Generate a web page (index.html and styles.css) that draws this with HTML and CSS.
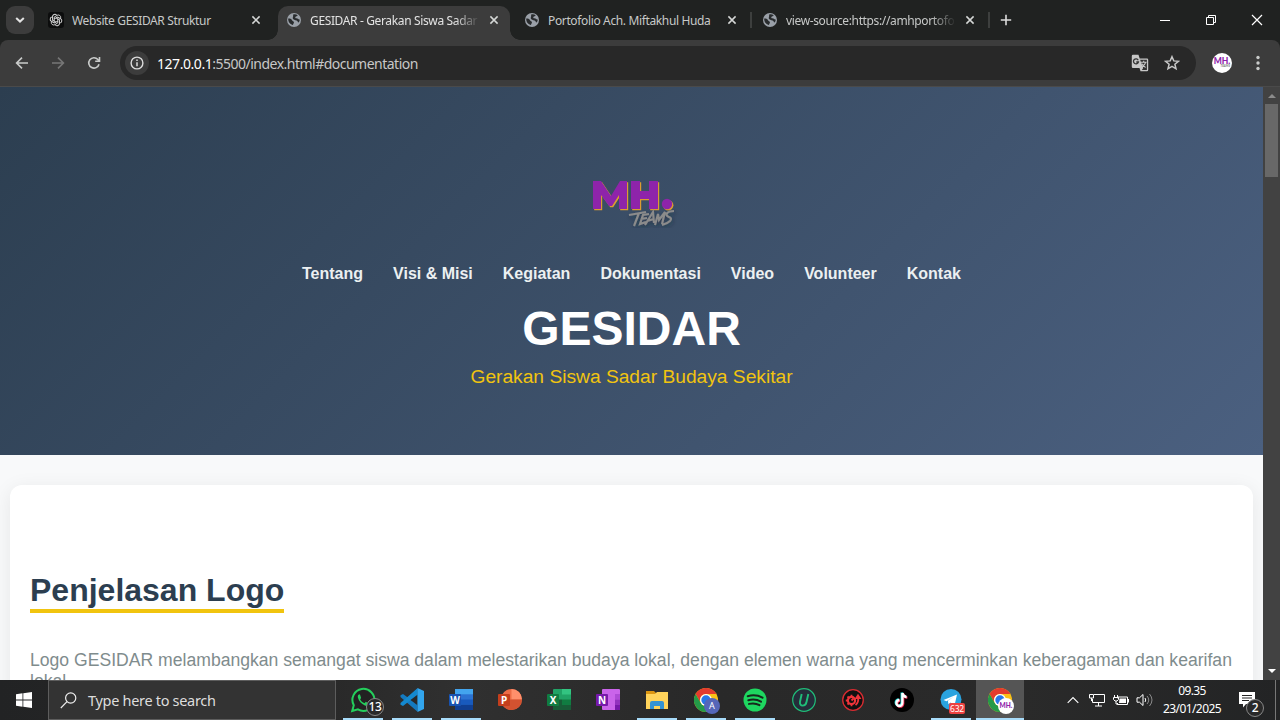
FILE: index.html
```html
<!DOCTYPE html>
<html lang="id">
<head>
<meta charset="utf-8">
<title>GESIDAR - Gerakan Siswa Sadar Budaya Sekitar</title>
<link rel="stylesheet" href="styles.css">
</head>
<body>
<svg class="defs" width="0" height="0">
  <symbol id="globe" viewBox="0 0 16 16"><circle cx="8" cy="8" r="7" fill="#9aa0a8"/><path d="M2.200 6.600C4 6.400 5.600 7 6 8.200c.4 1.100 1.600.7 1.900 1.700.3 1.200-.8 1.500-.9 3.100C4.600 12.600 2 10.500 2.200 6.600zM7 2.700c1.500-.7 3.500-.4 4.600.6-.2 1.200-1.800.9-2.300 1.900-.4 1 .8 1 2 1.200 1.100.2 1.400 1.100 2.500 1.200-.1 1.200-.5 2.200-1.200 3-1-.4-.8-1.900-2-2.200C9 8.100 7.200 7.800 6.800 6.500 6.500 5.300 7.600 4.300 7 2.700z" fill="#292c2e"/></symbol>
  <symbol id="x" viewBox="0 0 10 10"><path d="M1.400 1.400l7.200 7.200M8.600 1.400L1.400 8.600" stroke="#d5d7d6" stroke-width="1.500" fill="none"/></symbol>
  <symbol id="chrome" viewBox="0 0 24 24"><circle cx="12" cy="12" r="12" fill="#fbc116"/><path d="M1.600 6A12 12 0 0 1 22.400 6H12a6 6 0 0 0-5.200 9z" fill="#e33b2e"/><path d="M1.600 6A12 12 0 0 0 12 24l5.200-9A6 6 0 0 1 6.800 15z" fill="#249a48"/><circle cx="12" cy="12" r="6" fill="#fff"/><circle cx="12" cy="12" r="4.700" fill="#2877e8"/></symbol>
</svg>
<div class="screen">
  <div class="tabs">
    <div class="search-tabs"><svg width="10" height="6" viewBox="0 0 10 6"><path d="M1.200 1L5 4.600 8.800 1" fill="none" stroke="#e3e3e3" stroke-width="2"/></svg></div>
    <div class="tab">
      <svg class="fav" viewBox="0 0 16 16"><rect width="16" height="16" rx="3" fill="#0c0d0d"/><g fill="none" stroke="#d5d5d5" stroke-width="1"><path id="p" d="M6.200 9V5.100l3-1.800c1.800-1 4 .7 3.500 2.600"/><use href="#p" transform="rotate(60 8 8)"/><use href="#p" transform="rotate(120 8 8)"/><use href="#p" transform="rotate(180 8 8)"/><use href="#p" transform="rotate(240 8 8)"/><use href="#p" transform="rotate(300 8 8)"/></g></svg>
      <span class="title">Website GESIDAR Struktur</span><svg class="close"><use href="#x"/></svg>
    </div>
    <div class="tab active">
      <svg class="fav"><use href="#globe"/></svg><span class="title fade">GESIDAR - Gerakan Siswa Sadar</span><svg class="close"><use href="#x"/></svg>
    </div>
    <div class="tab sep">
      <svg class="fav"><use href="#globe"/></svg><span class="title">Portofolio Ach. Miftakhul Huda</span><svg class="close"><use href="#x"/></svg>
    </div>
    <div class="tab sep">
      <svg class="fav"><use href="#globe"/></svg><span class="title fade">view-source:https://amhportofo</span><svg class="close"><use href="#x"/></svg>
    </div>
    <svg class="plus" viewBox="0 0 12 12"><path d="M6 .8v10.400M.8 6h10.400" stroke="#dcdcdc" stroke-width="1.600"/></svg>
    <div class="winbtns">
      <svg viewBox="0 0 12 12"><path d="M1 6.500h10" stroke="#fff"/></svg>
      <svg viewBox="0 0 12 12"><path d="M1.500 3.500h7v7h-7zM3.500 3V1.500h7v7H9" fill="none" stroke="#fff"/></svg>
      <svg viewBox="0 0 12 12"><path d="M1 1l10 10M11 1L1 11" stroke="#fff" stroke-width="1.200"/></svg>
    </div>
  </div>
  <div class="toolwrap"><div class="toolbar">
    <svg class="nav-ic" viewBox="0 0 16 16"><path d="M14 8H3M8 2.600L2.600 8 8 13.400" fill="none" stroke="#c9cbca" stroke-width="1.600"/></svg>
    <svg class="nav-ic" viewBox="0 0 16 16"><path d="M2 8h11M8 2.600L13.400 8 8 13.400" fill="none" stroke="#777" stroke-width="1.600"/></svg>
    <svg class="nav-ic" viewBox="0 0 16 16"><path d="M13 9.200A5.200 5.200 0 1 1 11.900 4.500L13.300 6M13.500 2v4.300H9.200" fill="none" stroke="#c9cbca" stroke-width="1.600"/></svg>
    <div class="omnibox">
      <div class="info"><svg width="14" height="14" viewBox="0 0 14 14"><circle cx="7" cy="7" r="5.900" fill="none" stroke="#dcdcdc" stroke-width="1.400"/><path d="M7 6.200v4M7 3.600v1.500" stroke="#dcdcdc" stroke-width="1.500"/></svg></div>
      <span class="url"><b>127.0.0.1</b>:5500/index.html#documentation</span>
      <svg class="translate" viewBox="0 0 18 18"><path d="M2 .800h5.500l1.200 3.700h7.300a1.200 1.200 0 0 1 1.200 1.200v10.400a1.200 1.200 0 0 1-1.200 1.200H9.500l-1-3.400H2A1.200 1.200 0 0 1 .8 12.700V2A1.200 1.200 0 0 1 2 .8z" fill="#c7c7c7"/><path d="M9.100 5.700h6.800v10.400h-5l1.300-2.100z" fill="#303030"/><path d="M9.800 8.200h5.800M12.700 6.800v1.400M14.700 8.200c-.4 2-1.800 3.500-3.600 4.400M11 9.600c.7 1.700 2.100 3 3.600 3.900" fill="none" stroke="#c7c7c7" stroke-width="1.100"/><path d="M7.200 6.200A2.500 2.500 0 1 0 7.400 8H5.300" fill="none" stroke="#333" stroke-width="1.300"/></svg>
      <svg class="star" viewBox="0 0 16 16"><path d="M8 1.700l1.800 4.200 4.600.4-3.500 3 1.100 4.500L8 11.400l-4 2.400 1.100-4.500-3.500-3 4.600-.4z" fill="none" stroke="#c7c7c7" stroke-width="1.500"/></svg>
    </div>
    <div class="avatar"><b>MH.</b><i>TEAMS</i></div>
    <svg class="dots" viewBox="0 0 4 16"><g fill="#c9cbca"><circle cx="2" cy="2.500" r="1.700"/><circle cx="2" cy="8" r="1.700"/><circle cx="2" cy="13.500" r="1.700"/></g></svg>
  </div></div>
  <div class="view">
    <div class="page">
      <header class="hero">
        <svg class="logo" viewBox="0 0 130 75">
          <defs><filter id="sh"><feDropShadow dx="1" dy="2" stdDeviation="2" flood-color="#17202b" flood-opacity=".45"/></filter>
          <g id="mh"><path d="M23 44V16h8l10 15 9-15h7v28h-8V30l-7 11h-3l-8-11v14zM61 16h9v10h9V16h9v28h-9V34h-9v10h-9z"/><circle cx="97" cy="39" r="5.200"/></g></defs>
          <g><use href="#mh" x="1.200" y="1.200" fill="#dc9c30"/><use href="#mh" fill="#8e24aa"/></g>
          <g fill="none" stroke="#8b8b8b" stroke-width="2.100" filter="url(#sh)"><path d="M59 50l17-3M69 48l-5 13M79 49l-6 1-3 9 6-2M71 54l6-1M75 60l8-13 1 11M77 56l7-2M85 60l3-11 1 6 6-8-3 12M104 46c-7 0-10 4-5 6 5 2 0 6-7 8"/></g>
        </svg>
        <nav class="menu"><a>Tentang</a><a>Visi &amp; Misi</a><a>Kegiatan</a><a>Dokumentasi</a><a>Video</a><a>Volunteer</a><a>Kontak</a></nav>
        <h1>GESIDAR</h1>
        <p class="tagline">Gerakan Siswa Sadar Budaya Sekitar</p>
      </header>
      <section class="card">
        <h2>Penjelasan Logo</h2>
        <p>Logo GESIDAR melambangkan semangat siswa dalam melestarikan budaya lokal, dengan elemen warna yang mencerminkan keberagaman dan kearifan lokal.</p>
      </section>
    </div>
    <div class="scroll"><svg class="arrow" viewBox="0 0 17 17"><path d="M5 11h8L9 7z" fill="#8b8b8b"/></svg><div class="thumb"></div><svg class="arrow down" viewBox="0 0 17 17"><path d="M5 6h8l-4 4z" fill="#fff"/></svg></div>
  </div>
  <div class="taskbar">
    <div class="start"><svg width="16" height="16" viewBox="0 0 16 16"><path d="M0 2.200l6.500-.9v6.300H0zM7.300 1.200L16 0v7.600H7.300zM0 8.400h6.500v6.300L0 13.800zM7.300 8.400H16V16l-8.700-1.200z" fill="#fff"/></svg></div>
    <div class="search"><svg width="17" height="17" viewBox="0 0 17 17"><circle cx="10.700" cy="6" r="5.100" fill="none" stroke="#eee" stroke-width="1.200"/><path d="M7 9.700L.8 16" stroke="#eee" stroke-width="1.200"/></svg><span>Type here to search</span></div>
    <div class="apps">
      <div class="app run"><svg viewBox="0 0 24 24"><path d="M1.200 23l1.600-5.800a11 11 0 1 1 4.100 4.200z" fill="#222" stroke="#24cf5c" stroke-width="2"/><path d="M8.300 6.300c-1.200.5-1.800 1.700-1.400 3.200.8 3.300 3.400 6.500 7 7.900 1.700.7 3.600-.2 3.800-1.900l-2.900-1.800-1.300 1.500c-2-.7-3.500-2.200-4.400-4l1-1.300-1-3.100z" fill="#24cf5c"/></svg><span class="count">13</span></div>
      <div class="app run"><svg viewBox="0 0 24 24"><path d="M17.500.3L7.800 9.600 3 6 .5 7.300v1.600L17.500 23.700z" fill="#147ac0"/><path d="M17.500.3v6.400L3 18 .5 16.700v-1.600z" fill="#1489cf"/><path d="M17.500 6.700v10.600L10.500 12z" fill="#282828"/><path d="M17.500 0L24 3v18l-6.500 3z" fill="#32a5ed"/></svg></div>
      <div class="app run"><svg viewBox="0 0 24 24"><rect x="6" y="1" width="18" height="21" rx="1" fill="#2c73d2"/><path d="M6 1h18v5.300H6z" fill="#43a5ee"/><path d="M6 11.500h18v5.300H6z" fill="#185abd"/><path d="M6 16.800h18V22H6z" fill="#103f91"/><rect y="6" width="12" height="12" rx="1" fill="#1853b1"/><text class="ltr" x="6" y="15.500">W</text></svg></div>
      <div class="app"><svg viewBox="0 0 24 24"><circle cx="13.500" cy="11.500" r="10.500" fill="#ed6c47"/><path d="M13.500 1A10.500 10.500 0 0 1 24 11.500H13.500z" fill="#ff8f6b"/><path d="M3 11.500h21a10.500 10.500 0 0 1-21 0z" fill="#d35230"/><rect y="6" width="12" height="12" rx="1" fill="#c43e1c"/><text class="ltr" x="6" y="15.500">P</text></svg></div>
      <div class="app"><svg viewBox="0 0 24 24"><rect x="6" y="1" width="18" height="21" rx="1" fill="#21a366"/><path d="M15 1h9v5.500h-9z" fill="#33c481"/><path d="M6 11.500h9V17H6z" fill="#185c37"/><path d="M15 11.500h9V17h-9z" fill="#107c41"/><path d="M6 17h18v5H6z" fill="#185c37"/><rect y="6" width="12" height="12" rx="1" fill="#107c41"/><text class="ltr" x="6" y="15.500">X</text></svg></div>
      <div class="app"><svg viewBox="0 0 24 24"><rect x="6" y="1" width="18" height="21" rx="1" fill="#ca64ea"/><path d="M19 6h5v5.500h-5z" fill="#ae4bd5"/><path d="M19 11.500h5V17h-5z" fill="#9332bf"/><path d="M19 17h5v5h-5z" fill="#7719aa"/><rect y="6" width="12" height="12" rx="1" fill="#7719aa"/><text class="ltr" x="6" y="15.500">N</text></svg></div>
      <div class="app run"><svg viewBox="0 0 24 24"><path d="M1 3h8l2 2h12v4H1z" fill="#dc9612"/><path d="M1 6h9l2-2h11v17H1z" fill="#ffd35b"/><path d="M5 21v-6q0-2 2-2h10q2 0 2 2v6h-4v-3H9v3z" fill="#3493d4"/></svg></div>
      <div class="app run"><svg viewBox="0 0 24 24"><use href="#chrome"/></svg><span class="badge a">A</span></div>
      <div class="app run"><svg viewBox="0 0 24 24"><circle cx="12" cy="12" r="11.500" fill="#1ed760"/><path d="M4.700 8.200c5-1.400 10.300-1 14.800 1.500M5.300 12.200c4.500-1.200 8.800-.8 12.700 1.500M6 15.900c3.800-.9 7.300-.6 10.500 1.200" fill="none" stroke="#16291d" stroke-width="2" stroke-linecap="round"/></svg></div>
      <div class="app"><svg viewBox="0 0 24 24"><circle cx="12" cy="12" r="11.300" fill="#252d3a" stroke="#20bd79" stroke-width="1.200"/><path d="M9.700 6L8 13.800C7.200 18.800 13.500 18.800 14.500 14l1.800-8" fill="none" stroke="#20bd79" stroke-width="1.900"/></svg></div>
      <div class="app"><svg viewBox="0 0 24 24"><circle cx="12" cy="12" r="10.300" fill="#111" stroke="#d92c31" stroke-width="1.300"/><circle cx="10.500" cy="12.500" r="3.600" fill="none" stroke="#ef343a" stroke-width="2.200"/><path d="M10.500 6.800v2M10.500 16v2.200M4.800 12.500H7M6.500 8.500l1.500 1.500M6.500 16.500L8 15M10.500 12.500l2-2M14.500 17q3.500-3 2.500-7" fill="none" stroke="#ef343a" stroke-width="1.800"/><path d="M13.500 11L17 5.800l3.500 5.200z" fill="#ef343a"/></svg></div>
      <div class="app"><svg viewBox="0 0 24 24"><circle cx="12" cy="12" r="12" fill="#000"/><g fill="none" stroke-width="2.300"><path d="M12.400 5v10a3 3 0 1 1-3-3M12.400 5c.5 2.600 2 3.800 4.200 4" stroke="#25e5e2" transform="translate(-.7 -.5)"/><path d="M12.400 5v10a3 3 0 1 1-3-3M12.400 5c.5 2.600 2 3.800 4.200 4" stroke="#f52d55" transform="translate(.8 .7)"/><path d="M12.400 5v10a3 3 0 1 1-3-3M12.400 5c.5 2.600 2 3.800 4.200 4" stroke="#fff"/></g></svg></div>
      <div class="app run"><svg viewBox="0 0 24 24"><circle cx="12" cy="11.500" r="10.500" fill="#2aa3df"/><path d="M4.500 12L18 6.500l-2.500 11-4-3-2 1.800-.6-3.500L15 8.500l-7.500 4.700z" fill="#fff"/></svg><span class="unread">632</span></div>
      <div class="app run current"><svg viewBox="0 0 24 24"><use href="#chrome"/></svg><span class="badge mh">MH.</span></div>
    </div>
    <div class="tray">
      <svg class="chev" viewBox="0 0 12 8"><path d="M.7 6.800L6 1.500l5.300 5.300" fill="none" stroke="#fff" stroke-width="1.100"/></svg>
      <svg class="mon" viewBox="0 0 16 14"><path d="M5 1.500h10.500v8H3.500V6M9.500 10v3M6 13h7M.5 1.500h4v3.500h-4zM2.500 5v3" fill="none" stroke="#fff"/></svg>
      <svg class="bat" viewBox="0 0 16 12"><path d="M5 4.500V3h9.500v7.500h-10V9M15.500 5v3.500M1.500 1v2M4.500 1v2M.5 3.500h5v2L4 7H2L.5 5.500zM3 7v3h2" fill="none" stroke="#fff"/><path d="M6.500 4.500H13V9H6z" fill="#fff"/></svg>
      <svg class="spk" viewBox="0 0 17 14"><path d="M1 4.800h2.500L7 1.500v11L3.500 9.200H1z" fill="none" stroke="#fff"/><path d="M9 5q1.500 2 0 4" fill="none" stroke="#fff"/><path d="M11 3q3.500 4 0 8M13.500 1q5 6 0 12" fill="none" stroke="#8b8b8b"/></svg>
      <div class="clock"><span>09.35</span><span>23/01/2025</span></div>
      <div class="note"><svg width="16" height="16" viewBox="0 0 16 16"><path d="M0 0h16v12H7l-3 3.500V12H0z" fill="#fff"/><path d="M3 3.500h10M3 6h10M3 8.500h7" stroke="#242424"/></svg><span class="count">2</span></div>
      <div class="peek"></div>
    </div>
  </div>
</div>
</body>
</html>
```
FILE: styles.css
```css
* { box-sizing: border-box; }
body { margin: 0; overflow: hidden; }
.defs { display: block; height: 0; }
.screen { width: 1280px; height: 720px; display: flex; flex-direction: column; font-family: "Noto Sans", "Open Sans", sans-serif; overflow: hidden; }
svg { flex: none; display: block; }

.tabs { height: 40px; flex: none; background: #202221; display: flex; align-items: center; padding-left: 6px; }
.search-tabs { width: 28px; height: 28px; border-radius: 9px; background: #3c3c3c; display: flex; align-items: center; justify-content: center; margin-right: 6px; }
.tab { width: 238px; height: 40px; display: flex; align-items: center; padding-left: 8px; position: relative; }
.fav { width: 16px; height: 16px; margin-right: 8px; }
.title { width: 168px; white-space: nowrap; overflow: hidden; font-size: 12px; letter-spacing: -.36px; color: #c7c9c8; margin-right: 11px; line-height: 20px; padding-top: 1px; }
.close { width: 10px; height: 10px; }
.fade { mask-image: linear-gradient(90deg, #000 145px, transparent 170px); }
.active { height: 34px; align-self: flex-end; background: #3c3c3c; border-radius: 10px 10px 0 0; width: 232px; margin-right: 6px; padding-bottom: 6px; }
.active .title { color: #e3e3e3; }
.active::before, .active::after { content: ""; position: absolute; bottom: 0; width: 10px; height: 10px; }
.active::before { left: -10px; background: radial-gradient(circle at 0 0, transparent 9.500px, #3c3c3c 10px); }
.active::after { right: -10px; background: radial-gradient(circle at 100% 0, transparent 9.500px, #3c3c3c 10px); }
.sep::after { content: ""; position: absolute; right: 2px; top: 12px; width: 2px; height: 16px; background: #3d3f3e; }
.plus { width: 12px; height: 12px; margin-left: 8px; }
.winbtns { margin-left: auto; display: flex; gap: 34px; padding-right: 17px; }
.winbtns svg { width: 12px; height: 12px; }

.toolwrap { background: #202221; height: 47px; flex: none; }
.toolbar { height: 47px; background: #3c3c3c; border-radius: 8px 8px 0 0; border-bottom: 1px solid #4a4a4a; display: flex; align-items: center; padding-left: 14px; }
.nav-ic { width: 16px; height: 16px; margin-right: 20px; }
.omnibox { width: 1076px; height: 34px; margin-left: -2px; background: #282828; border-radius: 17px; display: flex; align-items: center; padding: 0 16px 0 5px; }
.info { width: 24px; height: 24px; border-radius: 50%; background: #3c3c3c; display: flex; align-items: center; justify-content: center; }
.url { font-size: 14px; color: #c7c7c7; letter-spacing: -.51px; margin-left: 8px; flex: 1; white-space: nowrap; }
.url b { font-weight: 400; color: #fff; letter-spacing: -.45px; }
.translate { width: 18px; height: 18px; margin-right: 15px; }
.star { width: 16px; height: 16px; }
.avatar { width: 20px; height: 20px; border-radius: 50%; background: #fff; margin-left: 16px; display: flex; flex-direction: column; align-items: center; justify-content: center; color: #8e24aa; overflow: hidden; }
.avatar b { font: 900 8.500px/7px Lato, sans-serif; }
.avatar i { font: italic 700 3px/3px Lato, sans-serif; color: #777; align-self: flex-end; padding-right: 2px; }
.dots { width: 4px; height: 16px; margin-left: 24px; }

.view { height: 593px; flex: none; display: flex; overflow: hidden; }
.page { width: 1263px; height: 593px; overflow: hidden; background: #f8f9fa; font-family: "Liberation Sans", Arial, sans-serif; }
.hero { height: 368px; background: linear-gradient(135deg, #2c3e50, #4b6080); display: flex; flex-direction: column; align-items: center; padding-top: 78px; }
.logo { width: 130px; height: 75px; margin-left: 7px; }
.menu { display: flex; gap: 30px; color: #ecf0f1; font-weight: 700; font-size: 16px; line-height: 18px; margin-top: 25px; }
.hero h1 { margin: 18px 0 0; font-size: 48px; line-height: 55px; color: #fff; }
.tagline { margin: 10px 0 0; font-size: 19.200px; line-height: 22px; color: #f1c40f; }
.card { margin: 30px 10px 0; height: 500px; background: #fff; border-radius: 12px; box-shadow: 0 4px 20px rgba(0,0,0,.08); padding: 86px 20px 0; }
.card h2 { margin: 0; width: fit-content; font-size: 32px; line-height: 38px; color: #2c3e50; border-bottom: 4px solid #f1c40f; }
.card p { margin: 37px 0 0; font-size: 17.600px; line-height: 21px; color: #7f8c8d; }
.scroll { width: 17px; background: #424242; display: flex; flex-direction: column; }
.arrow { width: 17px; height: 17px; }
.thumb { width: 13px; height: 73px; background: #686868; margin-left: 2px; }
.down { margin-top: auto; }

.taskbar { height: 40px; flex: none; background: linear-gradient(90deg, #222324 0, #292929 26%, #303030 36%, #292929 55%, #2a2a2a 80%, #232425); display: flex; }
.start { width: 48px; display: flex; align-items: center; justify-content: center; }
.search { width: 288px; border: 1px solid #5d5d5d; background: #333; display: flex; align-items: center; padding-left: 11px; gap: 11px; color: #ddd; font-size: 14.500px; letter-spacing: -.31px; }
.apps { display: flex; gap: 1px; margin-left: 3px; }
.app { width: 48px; height: 40px; display: flex; align-items: center; justify-content: center; position: relative; }
.app > svg { width: 24px; height: 24px; overflow: visible; }
.run::after { content: ""; position: absolute; left: 4px; right: 4px; bottom: 0; height: 2px; background: #a8dcfa; }
.current { background: #555; }
.current::after { left: 0; right: 0; }
.ltr { font: 700 10px "Noto Sans", sans-serif; fill: #fff; text-anchor: middle; }
.count { position: absolute; width: 18px; height: 18px; border-radius: 50%; border: 1px solid #888; background: #292929; color: #fff; font-weight: 500; font-size: 12px; line-height: 15px; text-align: center; letter-spacing: -.3px; }
.app .count { left: 27px; top: 18px; }
.badge { position: absolute; left: 22px; top: 18px; width: 16px; height: 16px; border-radius: 50%; text-align: center; }
.a { background: #5566b8; color: #fff; font-size: 9px; line-height: 16px; }
.mh { background: #fff; color: #8e24aa; font: 900 6.500px/15px Lato, sans-serif; }
.unread { position: absolute; left: 22px; top: 23px; width: 16px; height: 11px; border-radius: 2px; background: #ec4141; color: #fff; font-size: 8.500px; line-height: 11px; text-align: center; letter-spacing: -.2px; }
.tray { margin-left: auto; display: flex; align-items: center; height: 40px; }
.chev { width: 12px; height: 8px; }
.mon { width: 16px; height: 14px; margin-left: 10px; }
.bat { width: 16px; height: 12px; margin-left: 8px; }
.spk { width: 17px; height: 14px; margin-left: 7px; }
.clock { width: 60px; margin-left: 9px; display: flex; flex-direction: column; align-items: center; color: #fff; font-size: 12px; line-height: 18px; letter-spacing: -.6px; white-space: nowrap; }
.note { width: 24px; height: 16px; margin-left: 17px; position: relative; }
.note .count { left: 7px; top: 7px; }
.peek { width: 1px; height: 40px; background: #777; margin: 0 4px 0 12px; }
```
